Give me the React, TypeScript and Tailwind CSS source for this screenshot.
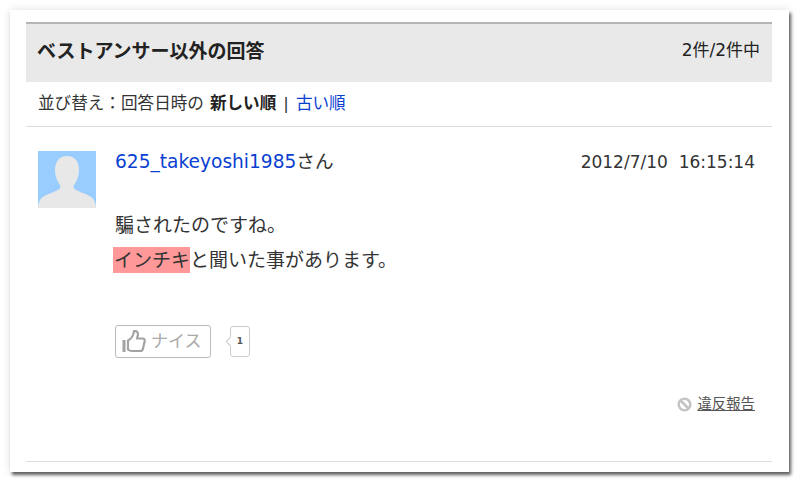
const FONT = "font-['DejaVu_Sans','Noto_Sans_CJK_JP',sans-serif]";

function Avatar() {
  return (
    <svg width="58" height="57" viewBox="0 0 58 57" className="shrink-0">
      <rect width="58" height="57" fill="#99ccff" />
      <path
        d="M29 5c-8 0-12 6-12 14 0 6 2 11 5 15 1 2 0 4-2 5-6 3-15 5-18 10-1 2-2 5-2 8h58c0-3-1-6-2-8-3-5-12-7-18-10-2-1-3-3-2-5 3-4 5-9 5-15 0-8-4-14-12-14z"
        fill="#e8e8e8"
      />
    </svg>
  );
}

function ThumbIcon() {
  return (
    <svg width="24" height="23" viewBox="0 0 24 23" fill="none" stroke="#a3a3a3" strokeWidth="2.200" className="shrink-0">
      <path d="M2 10v12" strokeWidth="3" />
      <path d="M6 10.500c3-1.500 5.500-4.500 6-9.500 3-.5 4.500 2 3.800 4.500l-.8 3h5.500c1.700 0 2.500 1 2.200 2.500l-1.700 7.500c-.3 1.500-1.300 2.500-2.800 2.500H10c-1.800 0-3-.5-4-1.500z" strokeLinejoin="round" />
    </svg>
  );
}

function BanIcon() {
  return (
    <svg width="15" height="15" viewBox="0 0 15 15" fill="none" stroke="#c4c4c4" strokeWidth="2.600" className="shrink-0">
      <circle cx="7.500" cy="7.500" r="5.800" />
      <path d="M3.500 3.500l8 8" />
    </svg>
  );
}

export default function App() {
  return (
    <div className={`w-[800px] h-[484px] overflow-hidden bg-white pt-[10px] pl-[10px] ${FONT}`}>
      <div className="w-[779px] h-[462px] bg-white pl-[16px] pr-[17px] pt-[12px] shadow-[0_0_9px_rgba(0,0,0,0.12),2px_3px_3px_rgba(0,0,0,0.6)]">
        {/* Header */}
        <div className="h-[60px] bg-[#e9e9e9] border-t-2 border-[#b5b5b5] flex items-center justify-between pl-[11px] pr-[12px] pb-[4px] text-[#222222]">
          <h2 className="text-[19px] font-bold">ベストアンサー以外の回答</h2>
          <span className="text-[17px]">2件/2件中</span>
        </div>

        {/* Sort row */}
        <div className="h-[45px] border-b border-[#dddddd] flex items-center pl-[12px] pt-[1px] text-[16.6px] text-[#333333]">
          <span>並び替え：回答日時の</span>
          <strong className="ml-[6px] font-bold text-[#222222]">新しい順</strong>
          <span className="mx-[7px]">|</span>
          <a className="text-[#0b3fd1]">古い順</a>
        </div>

        {/* Answer */}
        <div className="h-[335px] border-b border-[#dddddd] pl-[12px] pr-[17px] pt-[24px]">
          <div className="flex gap-[19px]">
            <Avatar />
            <div className="flex-1 flex justify-between h-[57px]">
              <div className="text-[18.6px] leading-[22px] text-[#333333]">
                <a className="text-[#0b3fd1]">625_takeyoshi1985</a>さん
              </div>
              <div className="text-[17px] leading-[22px] text-[#333333]">2012/7/10&nbsp;&nbsp;16:15:14</div>
            </div>
          </div>

          <div className="ml-[77px] text-[19px] leading-[35px] text-[#333333]">
            <p>騙されたのですね。</p>
            <p>
              <span className="-ml-[2px] pl-[1px] bg-[#ff9999] py-[2px]">インチキ</span>と聞いた事があります。
            </p>
          </div>

          <div className="ml-[77px] mt-[47px] flex items-center">
            <div className="w-[96px] h-[33px] border border-[#bbbbbb] rounded-[3px] flex items-center pl-[6px] gap-[5px] text-[17px] text-[#aaaaaa]">
              <ThumbIcon />
              <span>ナイス</span>
            </div>
            <div className="relative ml-[19px] w-[20px] h-[31px] border border-[#cccccc] rounded-[3px] bg-white flex items-center justify-center text-[9px] font-bold text-[#555555]">
              <span className="absolute left-[-4px] top-[11px] w-[7px] h-[7px] rotate-45 bg-white border-l border-b border-[#cccccc]" />
              <span className="relative">1</span>
            </div>
          </div>

          <div className="mt-[36px] flex items-center justify-end gap-[5px] text-[14.4px] text-[#555555]">
            <BanIcon />
            <a className="underline">違反報告</a>
          </div>
        </div>
      </div>
    </div>
  );
}
